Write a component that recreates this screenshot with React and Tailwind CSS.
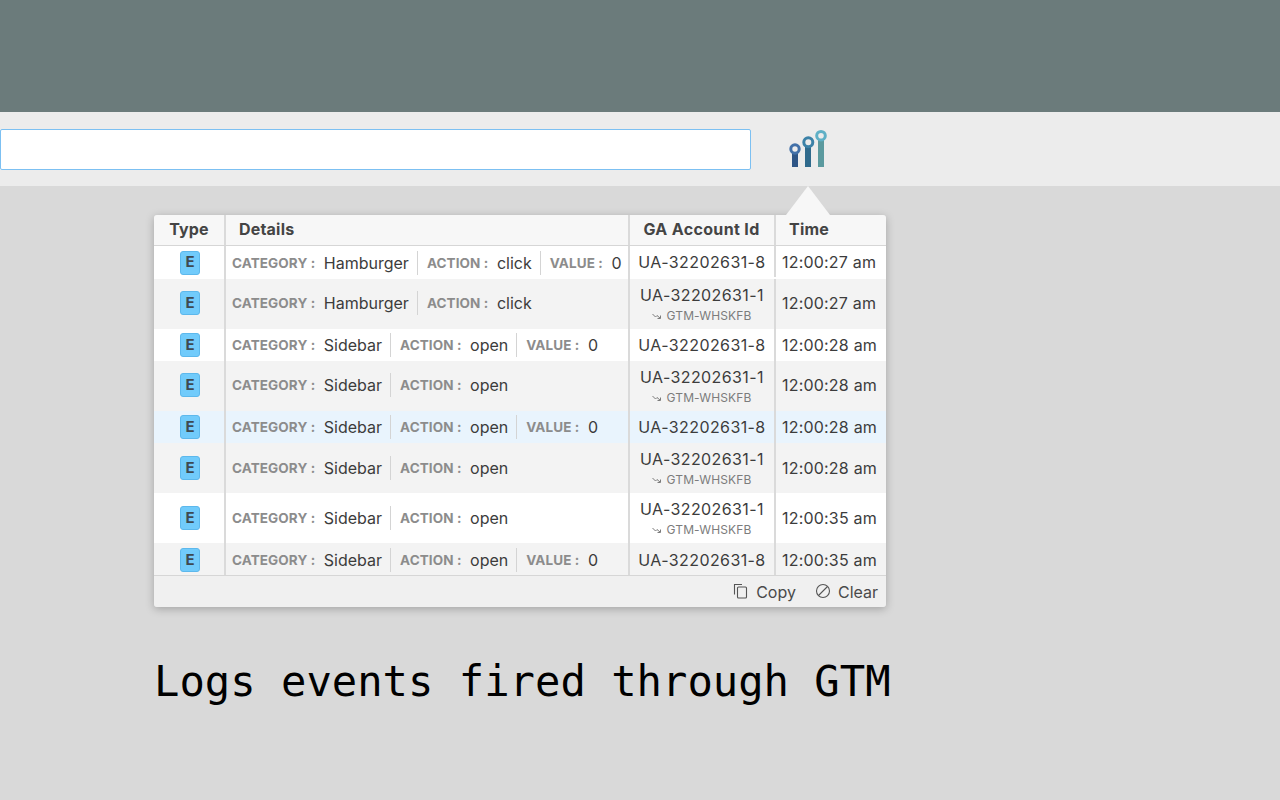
import React from "react";

const SANS = "font-['Inter','Liberation_Sans',sans-serif]";

const rows = [
  { cat: "Hamburger", act: "click", val: "0", id: "UA-32202631-8", time: "12:00:27 am", h: "h-[33px]", bg: "bg-white", pad: "", idPad: "mb-[2px]", tPad: "pb-[1px]" },
  { cat: "Hamburger", act: "click", id: "UA-32202631-1", gtm: true, time: "12:00:27 am", h: "h-[50px]", bg: "bg-[#f3f3f3]", pad: "pb-[2px]", idPad: "", tPad: "pb-[2px]" },
  { cat: "Sidebar", act: "open", val: "0", id: "UA-32202631-8", time: "12:00:28 am", h: "h-[32px]", bg: "bg-white", pad: "", idPad: "", tPad: "pb-[1px]" },
  { cat: "Sidebar", act: "open", id: "UA-32202631-1", gtm: true, time: "12:00:28 am", h: "h-[50px]", bg: "bg-[#f3f3f3]", pad: "pb-[2px]", idPad: "", tPad: "pb-[2px]" },
  { cat: "Sidebar", act: "open", val: "0", id: "UA-32202631-8", time: "12:00:28 am", h: "h-[32px]", bg: "bg-[#e9f4fd]", pad: "", idPad: "", tPad: "pb-[1px]" },
  { cat: "Sidebar", act: "open", id: "UA-32202631-1", gtm: true, time: "12:00:28 am", h: "h-[50px]", bg: "bg-[#f3f3f3]", pad: "", idPad: "pt-[1px]", tPad: "" },
  { cat: "Sidebar", act: "open", id: "UA-32202631-1", gtm: true, time: "12:00:35 am", h: "h-[50px]", bg: "bg-white", pad: "", idPad: "pt-[1px]", tPad: "" },
  { cat: "Sidebar", act: "open", val: "0", id: "UA-32202631-8", time: "12:00:35 am", h: "h-[32px]", bg: "bg-[#f3f3f3]", pad: "pt-[2px]", idPad: "pt-[2px]", tPad: "pt-[1px]" },
];

function Pair({ label, value, first, last }) {
  return (
    <div className={`flex items-center h-[24px] ${last ? "" : "border-r border-[#d4d4d4] pr-[8px]"} ${first ? "" : "ml-[9px]"}`}>
      <span className="text-[13.5px] font-bold text-[#8c8c8c] tracking-[0.1px] mr-[8.5px] mt-[1px] whitespace-nowrap">{label} :</span>
      <span className="text-[16px] text-[#3c3c3c] whitespace-nowrap">{value}</span>
    </div>
  );
}

function Logo() {
  return (
    <svg width="40" height="40" viewBox="0 0 40 40" className="block">
      <rect x="4" y="20" width="6" height="18" fill="#2e5586" />
      <circle cx="7" cy="20" r="4.2" fill="#ececec" stroke="#4270a8" strokeWidth="3" />
      <rect x="17" y="13" width="6" height="25" fill="#2f6a8c" />
      <circle cx="20.3" cy="13.3" r="4.5" fill="#ececec" stroke="#3c82a8" strokeWidth="3" />
      <rect x="30" y="7" width="6" height="31" fill="#5b9a9f" />
      <circle cx="33" cy="6.7" r="4.3" fill="#ececec" stroke="#5fb0c6" strokeWidth="3" />
    </svg>
  );
}

function Row({ r }) {
  return (
    <div className={`flex ${r.h} ${r.bg}`}>
      <div className={`w-[72px] flex items-center justify-center pl-[2px] border-r-2 border-[#dadada] ${r.pad}`}>
        <span className="w-[20px] h-[24px] rounded-[3px] bg-[#71cbfb] border border-[#5db8ec] flex items-center justify-center text-[15px] font-bold text-[#3e4a52]">E</span>
      </div>
      <div className={`w-[404px] flex items-center pl-[6px] border-r-2 border-[#dadada] ${r.pad}`}>
        <Pair label="CATEGORY" value={r.cat} first />
        <Pair label="ACTION" value={r.act} last={!r.val} />
        {r.val && <Pair label="VALUE" value={r.val} last />}
      </div>
      <div className={`w-[146px] flex flex-col items-center justify-center border-r-2 border-[#dadada] ${r.idPad}`}>
        <span className="text-[16px] tracking-[0.4px] text-[#3c3c3c] leading-[20px] whitespace-nowrap">{r.id}</span>
        {r.gtm && (
          <span className="flex items-center text-[12px] tracking-[0.15px] leading-[16px] text-[#7c7c7c] mt-[3px] whitespace-nowrap">
            <svg width="10" height="8" viewBox="0 0 10 8" className="mr-[4px]" fill="none" stroke="#7c7c7c" strokeWidth="1">
              <path d="M0.5 2 L3.5 5 L5 3.5 L8 6 M8.5 3.5 V6.5 H5.5" />
            </svg>
            GTM-WHSKFB
          </span>
        )}
      </div>
      <div className={`w-[110px] flex items-center pl-[6px] text-[16px] tracking-[0.2px] text-[#3c3c3c] whitespace-nowrap ${r.tPad}`}>{r.time}</div>
    </div>
  );
}

export default function App() {
  return (
    <div className={`w-[1280px] h-[800px] overflow-hidden bg-[#d9d9d9] ${SANS}`}>
      <div className="h-[112px] bg-[#6b7b7b]" />
      <div className="h-[74px] bg-[#ececec] flex items-center">
        <div className="w-[751px] h-[41px] bg-white border border-[#7cc0f2] rounded-[2px]" />
        <div className="ml-[37px]"><Logo /></div>
      </div>
      <div className="relative ml-[154px] mt-[29px] w-[732px] rounded-[3px] overflow-visible shadow-[0_2px_8px_rgba(0,0,0,0.25)]">
        <div className="absolute left-[632px] top-[-29px] w-0 h-0 border-l-[22px] border-r-[22px] border-b-[29px] border-l-transparent border-r-transparent border-b-[#f7f7f7]" />
        <div className="rounded-[3px] overflow-hidden">
          <div className="flex h-[31px] bg-[#f7f7f7] border-b border-[#d6d6d6] text-[16px] tracking-[0.2px] font-bold text-[#444444]">
            <div className="w-[72px] flex items-center justify-center border-r-2 border-[#dadada] pb-[3px]">Type</div>
            <div className="w-[404px] flex items-center pl-[13px] border-r-2 border-[#dadada] pb-[3px]">Details</div>
            <div className="w-[146px] flex items-center justify-center border-r-2 border-[#dadada] whitespace-nowrap pb-[3px] tracking-[0.35px] pr-[1px]">GA Account Id</div>
            <div className="w-[110px] flex items-center pl-[13px] pb-[3px]">Time</div>
          </div>
          {rows.map((r, i) => <Row key={i} r={r} />)}
          <div className="h-[32px] bg-[#f0f0f0] border-t border-[#d6d6d6] flex items-center justify-end pr-[8px] text-[16px] text-[#4a4a4a]">
            <svg width="16" height="16" viewBox="0 0 16 16" fill="none" stroke="#555555" strokeWidth="1.1" className="mr-[7px] mt-[-2px]">
              <path d="M1.5 11.5V1.5H9" />
              <rect x="4.5" y="4" width="9" height="11" rx="1" />
            </svg>
            <span>Copy</span>
            <svg width="16" height="16" viewBox="0 0 16 16" fill="none" stroke="#555555" strokeWidth="1.1" className="ml-[19px] mr-[7px] mt-[-2px]">
              <circle cx="8" cy="8" r="6.5" />
              <path d="M3.5 12.5L12.5 3.5" />
            </svg>
            <span>Clear</span>
          </div>
        </div>
      </div>
      <div className="ml-[154px] mt-[48px] text-[42.2px] leading-[54px] text-black whitespace-nowrap font-['DejaVu_Sans_Mono',monospace]">
        Logs events fired through GTM
      </div>
    </div>
  );
}
